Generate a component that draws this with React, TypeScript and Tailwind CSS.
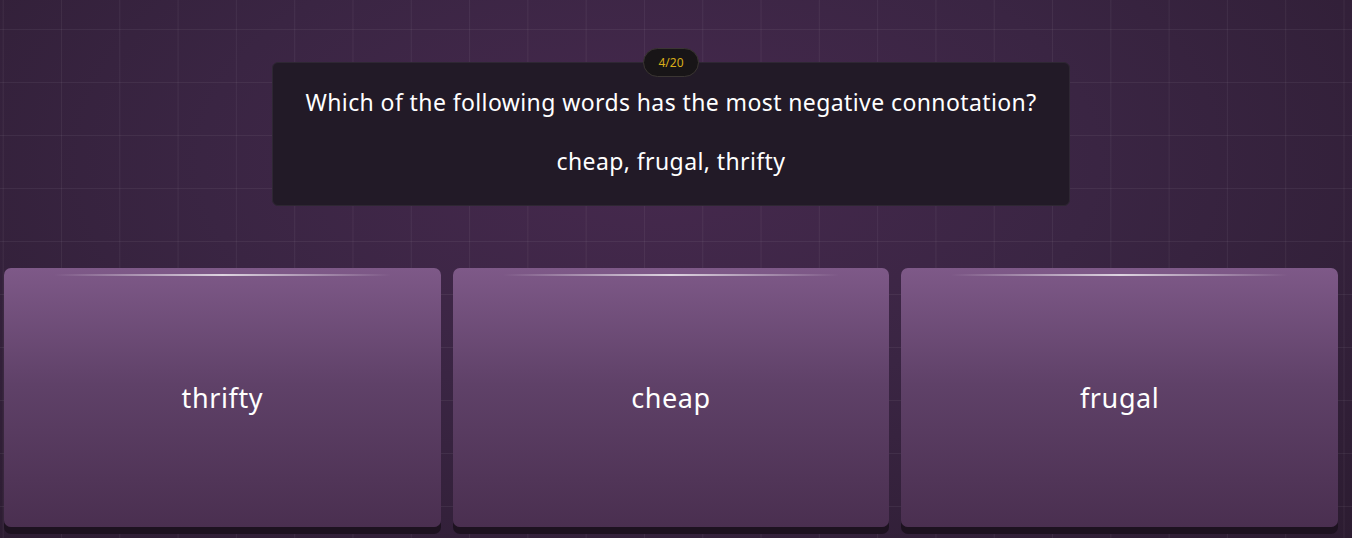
import React from 'react';

const answers = ['thrifty', 'cheap', 'frugal'];

function AnswerCard({ label }: { label: string }) {
  return (
    <button className="flex h-[259px] flex-1 flex-col rounded-[7px] bg-[linear-gradient(to_bottom,#7e5988,#5f4168_45%,#4a2f50)] shadow-[0_7px_0_#1d1220]">
      <div className="mx-[50px] mt-[6px] h-[2px] bg-[linear-gradient(to_right,transparent,rgba(255,255,255,0.75),transparent)]" />
      <div className="flex flex-1 items-center justify-center pb-[6px] text-[27px] tracking-[0.6px] text-white">{label}</div>
    </button>
  );
}

export default function App() {
  return (
    <div
      className="h-[538px] w-full overflow-hidden font-['Noto_Sans',sans-serif] [background-image:linear-gradient(to_right,rgba(255,255,255,0.055)_1px,transparent_1px),linear-gradient(to_bottom,rgba(255,255,255,0.055)_1px,transparent_1px),radial-gradient(ellipse_at_48%_30%,#46294e_0%,#3a2543_45%,#2c1c31_100%)] [background-size:58.3px_53px,58.3px_53px,100%_100%] [background-position:2.7px_29px,2.7px_29px,0_0]"
    >
      <div className="relative ml-[272px] mt-[62px] h-[144px] w-[798px] rounded-[6px] border border-[#2e2733] bg-[#221a27] pt-[23px] text-center text-white">
        <div className="absolute -top-[15px] left-1/2 flex h-[29px] w-[56px] -translate-x-1/2 items-center justify-center rounded-full border border-[#3b3633] bg-[#181517] text-[12px] text-[#d8ad17]">
          4/20
        </div>
        <p className="text-[23px] leading-[32px] tracking-[0.4px]">Which of the following words has the most negative connotation?</p>
        <p className="mt-[27px] text-[23px] leading-[32px] tracking-[0.4px]">cheap, frugal, thrifty</p>
      </div>
      <div className="mt-[62px] flex gap-3 pl-[4px] pr-[14px]">
        {answers.map((a) => (
          <AnswerCard key={a} label={a} />
        ))}
      </div>
    </div>
  );
}
